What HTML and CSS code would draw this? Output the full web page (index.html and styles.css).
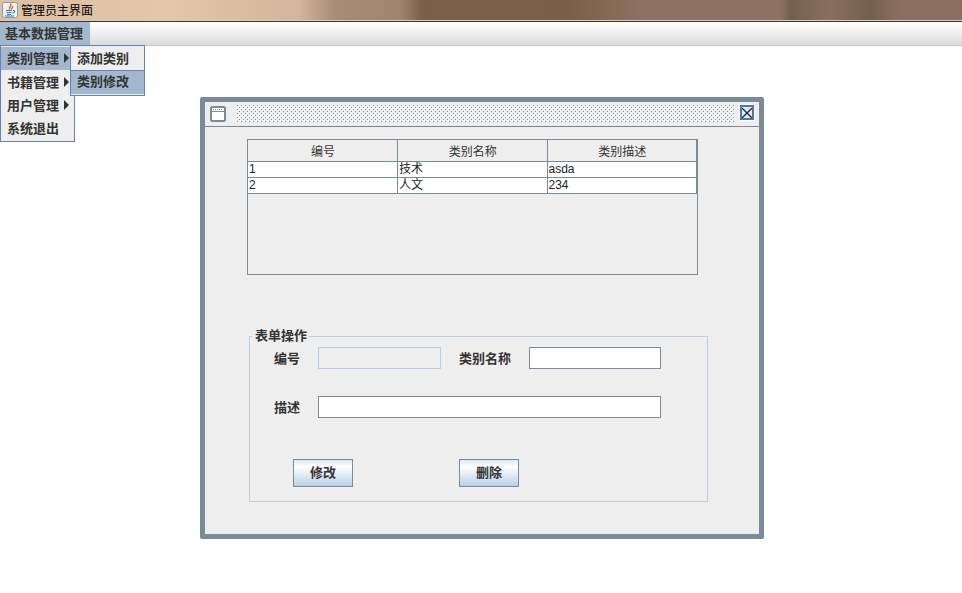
FILE: index.html
```html
<!DOCTYPE html>
<html lang="zh">
<head>
<meta charset="utf-8">
<title>管理员主界面</title>
<link rel="stylesheet" href="styles.css">
</head>
<body>
<div class="app">
  <header class="titlebar">
    <svg class="app-icon" width="16" height="16" viewBox="0 0 16 16">
      <rect x="0.500" y="0.500" width="15" height="15" rx="2" fill="#f0f1f2" stroke="#8f9aa6"/>
      <path d="M8.500 1.500c2 2.500-2.500 3.500-.5 6M10.500 4c1 1.500-1.500 2-.5 3.500" fill="none" stroke="#e2621b" stroke-width="1.400"/>
      <path d="M4 8.500h6M4.500 10.500h5M5 12.500h4M11 8.500c2-.5 2.500 2-.5 2.500M3 14h9" fill="none" stroke="#3a78ad" stroke-width="1.100"/>
    </svg>
    <span class="title-text">管理员主界面</span>
  </header>
  <nav class="menubar">
    <div class="menu-root">基本数据管理</div>
  </nav>
  <main class="desktop">
    <section class="frame">
      <div class="frame-title">
        <svg class="frame-icon" width="16" height="16" viewBox="0 0 16 16">
          <rect x="1" y="1" width="14" height="14" rx="1.500" fill="#fff" stroke="#7a8a99" stroke-width="2"/>
          <path d="M2 5.500h12" stroke="#7a8a99"/>
          <path d="M3 3.500h10" stroke="#7a8a99" stroke-dasharray="1 1"/>
        </svg>
        <svg class="bumps" width="498" height="18">
          <defs>
            <pattern id="dots" width="4" height="4" patternUnits="userSpaceOnUse">
              <rect x="0" y="0" width="1" height="1" fill="#7f8f9e"/>
              <rect x="2" y="2" width="1" height="1" fill="#7f8f9e"/>
              <rect x="1" y="1" width="1" height="1" fill="#fff"/>
              <rect x="3" y="3" width="1" height="1" fill="#fff"/>
            </pattern>
          </defs>
          <rect width="498" height="18" fill="url(#dots)"/>
        </svg>
        <div class="close-btn">
          <svg width="10" height="10" viewBox="0 0 10 10"><path d="M0 0l10 10M10 0L0 10" stroke="#14233a" stroke-width="1.300" fill="none"/></svg>
        </div>
      </div>
      <div class="frame-body">
        <div class="scrollpane">
          <table class="grid">
            <colgroup><col class="col"><col class="col"><col class="col"></colgroup>
            <thead><tr><th>编号</th><th>类别名称</th><th>类别描述</th></tr></thead>
            <tbody>
              <tr><td>1</td><td>技术</td><td>asda</td></tr>
              <tr><td>2</td><td>人文</td><td>234</td></tr>
            </tbody>
          </table>
        </div>
        <fieldset class="form-box">
          <legend class="form-legend">表单操作</legend>
          <div class="form-grid">
            <label class="lbl">编号</label>
            <input class="field field-disabled" disabled>
            <label class="lbl lbl-name">类别名称</label>
            <input class="field">
            <label class="lbl">描述</label>
            <input class="field field-wide">
          </div>
          <div class="actions">
            <button class="btn" type="button">修改</button>
            <button class="btn" type="button">删除</button>
          </div>
        </fieldset>
      </div>
    </section>
    <div class="popup popup-main">
      <div class="item active">类别管理<span class="arrow"></span></div>
      <div class="item">书籍管理<span class="arrow"></span></div>
      <div class="item">用户管理<span class="arrow"></span></div>
      <div class="item">系统退出</div>
    </div>
    <div class="popup popup-sub">
      <div class="item">添加类别</div>
      <div class="item active">类别修改</div>
    </div>
  </main>
</div>
</body>
</html>
```

FILE: styles.css
```css
* { box-sizing: border-box; }
html, body { margin: 0; height: 100%; background: #fff; overflow: hidden; }
body { font-family: "Liberation Sans", "Noto Sans CJK SC", sans-serif; font-size: 12px; color: #333; }
.app { display: flex; flex-direction: column; height: 593px; }

.titlebar {
  height: 22px;
  display: flex;
  align-items: center;
  gap: 3px;
  padding: 0 0 2px 2px;
  border-bottom: 1px solid #3e3630;
  box-shadow: inset 0 -1px 0 #d8cabc;
  background: linear-gradient(90deg, #dcc0a4 0, #e4c6a9 170px, #d2b59a 300px, #a88d76 335px, #a08670 400px, #7b6049 422px, #7a604b 570px, #8d735f 640px, #8d735f 780px, #72604c 790px, #8a705c 830px, #72604c 870px, #8b715d 900px, #8b715d 100%);
}
.app-icon { flex: none; }
.title-text { font-family: "Noto Sans CJK SC", sans-serif; font-size: 12px; color: #000; }

.menubar {
  height: 24px;
  background: linear-gradient(#fff, #dcdcdc);
  border-bottom: 1px solid #c6c6c6;
  display: flex;
}
.menu-root {
  width: 90px;
  height: 23px;
  padding-left: 5px;
  line-height: 22px;
  background: #a3b8cc;
  font-family: "Noto Sans CJK SC", sans-serif;
  font-size: 13px;
  font-weight: 700;
}

.desktop { position: relative; flex: 1; }

.popup {
  position: absolute;
  background: #eee;
  border: 1px solid #6382bf;
  font-family: "Noto Sans CJK SC", sans-serif;
  font-size: 13px;
  font-weight: 700;
}
.popup-main { left: 0; top: -1px; width: 75px; height: 97px; padding-top: 1px; }
.popup-sub { left: 70px; top: -1px; width: 75px; height: 51px; padding-top: 1px; }
.item {
  height: 23px;
  line-height: 21px;
  padding: 0 0 0 6px;
  display: flex;
  align-items: center;
  gap: 5px;
}
.popup-main .item.active { padding-bottom: 2px; }
.item.active { background: #a3b8cc; }
.popup-sub .item { height: 24px; padding-bottom: 4px; }
.popup-sub .item.active { height: 24px; margin-top: -1px; padding-bottom: 4px; border-top: 1px solid #6382bf; }
.arrow { width: 0; height: 0; border-left: 5px solid #333; border-top: 5px solid transparent; border-bottom: 5px solid transparent; }

.frame {
  position: absolute;
  left: 200px;
  top: 51px;
  width: 564px;
  height: 442px;
  border: 5px solid #7a8a99;
  border-radius: 2px;
  background: #eee;
  display: flex;
  flex-direction: column;
}
.frame-title {
  height: 25px;
  flex: none;
  display: flex;
  align-items: flex-start;
  padding: 3px 5px 0 5px;
  border-bottom: 1px solid #7a8a99;
}
.frame-icon { margin-top: 1px; flex: none; }
.bumps { margin-left: 11px; flex: none; }
.close-btn {
  width: 14px;
  height: 15px;
  margin-left: 5px;
  border: 2px solid #4f74ad;
  outline: 1px solid #fff;
  background: #e6ebf1;
  display: flex;
  align-items: center;
  justify-content: center;
}

.frame-body { flex: 1; padding: 12px 0 0 42px; }
.scrollpane { width: 451px; height: 136px; border: 1px solid #7a8a99; }
.grid { width: 449px; table-layout: fixed; border-collapse: collapse; font-size: 12px; }
.grid th {
  height: 21px;
  padding: 0 0 0 1px;
  font-weight: 400;
  text-align: center;
  font-family: "Noto Sans CJK SC", sans-serif;
  background: #eee;
  border: 1px solid #7a8a99;
  border-top: 0;
}
.grid th:first-child, .grid td:first-child { border-left: 0; }
.grid td {
  height: 16px;
  padding: 0 0 1px 1px;
  line-height: 14px;
  background: #fff;
  color: #222;
  border: 1px solid #7a8a99;
}

.form-box {
  width: 459px;
  height: 174px;
  margin: 53px 0 0 2px;
  padding: 0;
  border: 1px solid #c0cfe0;
  min-width: 0;
}
.form-legend {
  margin-left: 2px;
  padding: 0 2px 2px 3px;
  line-height: 14px;
  font-family: "Noto Sans CJK SC", sans-serif;
  font-size: 13px;
  font-weight: 700;
}
.form-grid {
  display: grid;
  grid-template-columns: 44px 123px 88px 132px;
  row-gap: 27px;
  padding: 3px 0 0 24px;
  font-family: "Noto Sans CJK SC", sans-serif;
  font-size: 13px;
  font-weight: 700;
  align-items: center;
}
.lbl { height: 22px; line-height: 21px; white-space: nowrap; }
.lbl-name { padding-left: 18px; }
.field {
  height: 22px;
  min-width: 0;
  width: 100%;
  padding: 0;
  border: 1px solid #7a8a99;
  background: #fff;
  outline: 0;
}
.field-disabled { background: #eee; border-color: #b8cfe5; }
.field-wide { grid-column: 2 / 5; }

.actions { display: flex; gap: 106px; margin: 41px 0 0 43px; }
.btn {
  width: 60px;
  height: 28px;
  padding: 0 0 4px;
  border: 1px solid #7a8a99;
  background: linear-gradient(#dde8f3 0, #fff 25%, #b8cfe5 100%);
  color: #333;
  font-family: "Noto Sans CJK SC", sans-serif;
  font-size: 13px;
  font-weight: 700;
}
```
